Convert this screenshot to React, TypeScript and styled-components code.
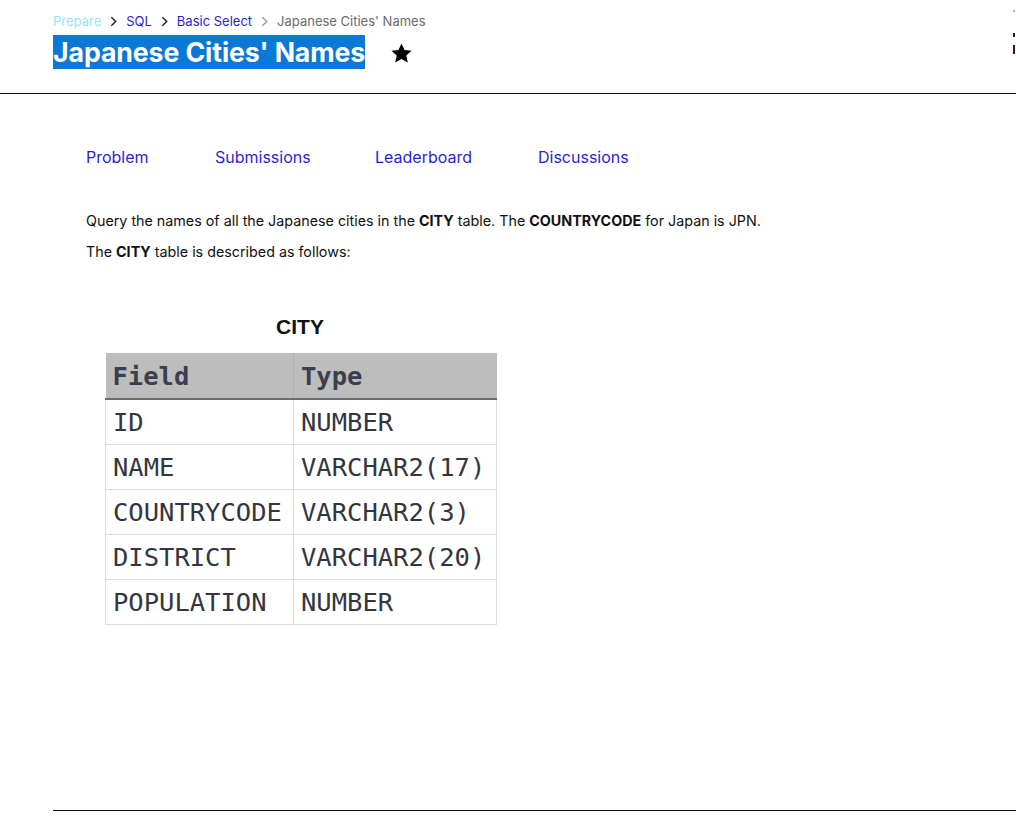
import React from "react"
import styled, { createGlobalStyle } from "styled-components"

const GlobalStyle = createGlobalStyle`
    html, body {
        margin: 0;
        padding: 0;
        background: #ffffff;
        font-family: Inter, "Noto Sans", Arial, sans-serif;
    }
`

const Page = styled.div`
    position: relative;
    width: 1016px;
    height: 821px;
    overflow: hidden;
`

const Header = styled.header`
    padding: 12px 0 0 53px;
    height: 81px;
    border-bottom: 1.5px solid #111;
`

const Crumbs = styled.nav`
    display: flex;
    align-items: center;
    gap: 7px;
    font-size: 13px;
    line-height: 18px;
`

const Crumb = styled.span<{ tone: "faint" | "link" | "current" }>`
    color: ${({ tone }) =>
        tone === "faint" ? "#8ee8f5" : tone === "link" ? "#2a1fd6" : "#6b6b6b"};
`

const Chevron = styled.span<{ light?: boolean }>`
    display: inline-flex;
    color: ${({ light }) => (light ? "#9a9a9a" : "#222")};
`

const TitleRow = styled.div`
    display: flex;
    align-items: center;
    gap: 24px;
    margin-top: 5px;
`

const Title = styled.h1`
    margin: 0;
    font-size: 26.7px;
    font-weight: 700;
    line-height: 34px;
    color: #fff;
    background: #0a78d7;
    letter-spacing: -0.1px;
`

const Star = styled.svg`
    width: 25px;
    height: 25px;
    margin-top: 2px;
`

const EdgeMarks = styled.div`
    position: absolute;
    right: 1px;
    top: 10px;
    display: flex;
    flex-direction: column;
`

const Mark = styled.span<{ h: number; c: string; m: number }>`
    display: block;
    width: 2px;
    height: ${({ h }) => h}px;
    background: ${({ c }) => c};
    margin-top: ${({ m }) => m}px;
`

const Main = styled.main`
    padding: 52px 0 0 86px;
`

const Tabs = styled.div`
    display: flex;
    font-size: 16px;
    line-height: 22px;
`

const Tab = styled.a<{ w: number }>`
    width: ${({ w }) => w}px;
    color: #2a1fd6;
    text-decoration: none;
`

const Para = styled.p`
    margin: 0;
    font-size: 14.3px;
    line-height: 20px;
    color: #111;
    & + & {
        margin-top: 11px;
    }
    b {
        font-weight: 700;
    }
`

const Description = styled.div`
    margin-top: 43px;
`

const Figure = styled.figure`
    margin: 52px 0 0 19px;
    width: 392px;
`

const Caption = styled.figcaption`
    text-align: center;
    font-family: "Liberation Sans", Arial, sans-serif;
    font-weight: 700;
    font-size: 21px;
    line-height: 26px;
    color: #111;
    margin-bottom: 13px;
    padding-right: 2px;
`

const Table = styled.table`
    border-collapse: collapse;
    table-layout: fixed;
    width: 392px;
    font-family: "DejaVu Sans Mono", monospace;
    font-size: 25.5px;
    color: #33363f;
`

const HeadCell = styled.th`
    background: #bdbdbd;
    text-align: left;
    font-weight: 700;
    height: 45px;
    padding: 0 0 0 7px;
    border-bottom: 2px solid #6d6d6d;
    border-right: 1px solid #b0b0b0;
    color: #3b3e4c;
    &:last-child {
        border-right: none;
    }
`

const Cell = styled.td`
    height: 44px;
    padding: 0 0 0 7px;
    border: 1px solid #dcdcdc;
    white-space: nowrap;
    overflow: visible;
`

const Footer = styled.div`
    position: absolute;
    left: 53px;
    right: 0;
    top: 810px;
    border-top: 1.5px solid #111;
`

const rows: [string, string][] = [
    ["ID", "NUMBER"],
    ["NAME", "VARCHAR2(17)"],
    ["COUNTRYCODE", "VARCHAR2(3)"],
    ["DISTRICT", "VARCHAR2(20)"],
    ["POPULATION", "NUMBER"],
]

const ChevronIcon = () => (
    <svg width="11" height="11" viewBox="0 0 10 10" fill="none">
        <path d="M3 1.2 L7 5 L3 8.8" stroke="currentColor" strokeWidth="1.3" />
    </svg>
)

export default function App(): JSX.Element {
    return (
        <Page>
            <GlobalStyle />
            <Header>
                <Crumbs>
                    <Crumb tone="faint">Prepare</Crumb>
                    <Chevron>
                        <ChevronIcon />
                    </Chevron>
                    <Crumb tone="link">SQL</Crumb>
                    <Chevron>
                        <ChevronIcon />
                    </Chevron>
                    <Crumb tone="link">Basic Select</Crumb>
                    <Chevron light>
                        <ChevronIcon />
                    </Chevron>
                    <Crumb tone="current">Japanese Cities' Names</Crumb>
                </Crumbs>
                <TitleRow>
                    <Title>Japanese Cities' Names</Title>
                    <Star viewBox="0 0 24 24">
                        <path
                            d="M12 2.5l2.9 6.2 6.8.7-5.1 4.6 1.5 6.7L12 17.3l-6.1 3.4 1.5-6.7-5.1-4.6 6.8-.7z"
                            fill="#000"
                        />
                    </Star>
                </TitleRow>
            </Header>
            <EdgeMarks>
                <Mark h={2} c="#bbb" m={0} />
                <Mark h={4} c="#222" m={21} />
                <Mark h={9} c="#4a1010" m={8} />
            </EdgeMarks>
            <Main>
                <Tabs>
                    <Tab w={129}>Problem</Tab>
                    <Tab w={160}>Submissions</Tab>
                    <Tab w={163}>Leaderboard</Tab>
                    <Tab w={120}>Discussions</Tab>
                </Tabs>
                <Description>
                    <Para>
                        Query the names of all the Japanese cities in the <b>CITY</b> table. The{" "}
                        <b>COUNTRYCODE</b> for Japan is JPN.
                    </Para>
                    <Para>
                        The <b>CITY</b> table is described as follows:
                    </Para>
                </Description>
                <Figure>
                    <Caption>CITY</Caption>
                    <Table>
                        <colgroup>
                            <col style={{ width: 188 }} />
                            <col />
                        </colgroup>
                        <thead>
                            <tr>
                                <HeadCell>Field</HeadCell>
                                <HeadCell>Type</HeadCell>
                            </tr>
                        </thead>
                        <tbody>
                            {rows.map(([field, type]) => (
                                <tr key={field}>
                                    <Cell>{field}</Cell>
                                    <Cell>{type}</Cell>
                                </tr>
                            ))}
                        </tbody>
                    </Table>
                </Figure>
            </Main>
            <Footer />
        </Page>
    )
}
